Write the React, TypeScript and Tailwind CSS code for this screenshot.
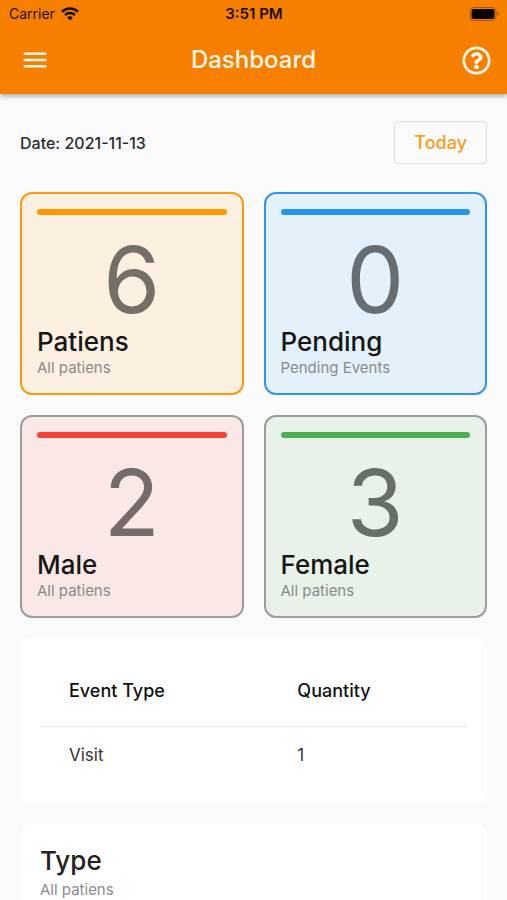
import { MdMenu } from "react-icons/md";
import { FaRegQuestionCircle } from "react-icons/fa";

type Stat = {
  value: number;
  title: string;
  subtitle: string;
  card: string;
  bar: string;
  number: string;
};

const stats: Stat[] = [
  {
    value: 6,
    title: "Patiens",
    subtitle: "All patiens",
    card: "border-[#fb9a0c] bg-[#fcf0e1]",
    bar: "bg-[#ff9800]",
    number: "text-[#766f67]",
  },
  {
    value: 0,
    title: "Pending",
    subtitle: "Pending Events",
    card: "border-[#2f96ec] bg-[#e4f0fa]",
    bar: "bg-[#2196f3]",
    number: "text-[#666d73]",
  },
  {
    value: 2,
    title: "Male",
    subtitle: "All patiens",
    card: "border-[#9c9c9c] bg-[#fae8e7]",
    bar: "bg-[#f44336]",
    number: "text-[#766a6a]",
  },
  {
    value: 3,
    title: "Female",
    subtitle: "All patiens",
    card: "border-[#9c9c9c] bg-[#e8f2e9]",
    bar: "bg-[#4caf50]",
    number: "text-[#686f69]",
  },
];

const events = [{ type: "Visit", quantity: 1 }];

function WifiIcon() {
  return (
    <svg width="18" height="14" viewBox="0 0 18 14" fill="none" stroke="#1c0f00" aria-hidden="true">
      <path d="M1 4.700a11.500 11.500 0 0 1 16 0" strokeWidth="2.600" />
      <path d="M4 8a7.200 7.200 0 0 1 10 0" strokeWidth="2.500" />
      <path d="M9 13.600 6.200 10.600a4 4 0 0 1 5.600 0z" fill="#1c0f00" stroke="none" />
    </svg>
  );
}

function BatteryIcon() {
  return (
    <svg width="30" height="14" viewBox="0 0 30 14" aria-hidden="true">
      <rect x="1" y="0.5" width="26" height="13" rx="3.5" fill="none" stroke="#a55a0a" />
      <rect x="2.5" y="2" width="23" height="10" rx="2" fill="#0a0500" />
      <path d="M28.300 4.800c1 .4 1.500 1.200 1.500 2.200S29.300 8.800 28.300 9.200z" fill="#a55a0a" />
    </svg>
  );
}

function StatusBar() {
  return (
    <div className="grid h-7 grid-cols-[1fr_auto_1fr] items-center pr-2 pl-[9px] text-sm text-[#1c0f00]">
      <div className="flex items-center gap-1.5">
        <span>Carrier</span>
        <WifiIcon />
      </div>
      <span className="text-[15px] font-semibold">3:51 PM</span>
      <div className="flex justify-end">
        <BatteryIcon />
      </div>
    </div>
  );
}

function StatCard({ stat }: { stat: Stat }) {
  return (
    <article className={`rounded-xl border-2 px-[15px] pt-[15px] pb-[13px] ${stat.card}`}>
      <div className={`h-1.5 rounded-full ${stat.bar}`} />
      <p className={`pt-[17px] text-center text-[92px] leading-[96px] ${stat.number}`}>{stat.value}</p>
      <h2 className="text-[26px] leading-7 font-medium text-[#161616]">{stat.title}</h2>
      <p className="text-[15px] leading-6 text-[#8b8b8b]">{stat.subtitle}</p>
    </article>
  );
}

export default function App() {
  return (
    <div className="flex h-screen flex-col bg-[#fafafa] font-[Inter,sans-serif]">
      <header className="relative shrink-0 bg-[#f77f00] pb-0.5 shadow-[0_2px_5px_rgba(0,0,0,0.35)]">
        <StatusBar />
        <div className="grid h-16 grid-cols-[1fr_auto_1fr] items-center px-4 text-[#fff8ea]">
          <button type="button" aria-label="Open menu" className="justify-self-start p-1">
            <MdMenu size={30} />
          </button>
          <h1 className="text-2xl font-medium">Dashboard</h1>
          <button type="button" aria-label="Help" className="justify-self-end">
            <FaRegQuestionCircle size={29} />
          </button>
        </div>
      </header>

      <main className="flex flex-1 flex-col gap-5 overflow-y-auto px-5 pt-[27px] [scrollbar-width:none]">
        <div className="mb-2 flex items-center justify-between">
          <p className="text-base font-medium text-[#2b2b2b]">Date: 2021-11-13</p>
          <button
            type="button"
            className="h-[43px] rounded border border-[#dedede] px-[19px] text-lg font-medium text-[#f99b17]"
          >
            Today
          </button>
        </div>

        <section className="grid grid-cols-2 gap-5">
          {stats.map((stat) => (
            <StatCard key={stat.title} stat={stat} />
          ))}
        </section>

        <section className="rounded-xl bg-white px-5 pt-[18px] pb-5">
          <table className="w-full table-fixed text-left text-[17px] leading-6">
            <thead>
              <tr className="h-[70px] border-b border-[#e4e4e4] text-lg leading-6 text-[#111111]">
                <th className="w-[53%] pl-[29px] font-medium">Event Type</th>
                <th className="pl-[31px] font-medium">Quantity</th>
              </tr>
            </thead>
            <tbody>
              {events.map((event) => (
                <tr key={event.type} className="h-[58px] text-[#333333]">
                  <td className="pl-[29px]">{event.type}</td>
                  <td className="pl-[31px]">{event.quantity}</td>
                </tr>
              ))}
            </tbody>
          </table>
        </section>

        <section className="rounded-xl bg-white px-5 pt-[23px] pb-5">
          <h2 className="text-[26px] leading-7 font-medium text-[#222222]">Type</h2>
          <p className="mt-[3px] text-[15px] leading-6 text-[#8b8b8b]">All patiens</p>
        </section>
      </main>
    </div>
  );
}
